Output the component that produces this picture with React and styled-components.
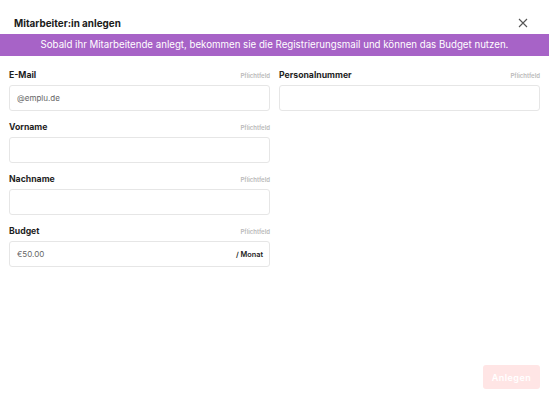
import React, { useState } from 'react';
import styled, { createGlobalStyle } from 'styled-components';

const GlobalStyle = createGlobalStyle`
  body {
    margin: 0;
    background: #ffffff;
    font-family: Inter, "Noto Sans", sans-serif;
  }
`;

const Modal = styled.div`
  width: 549px;
  height: 398px;
  display: flex;
  flex-direction: column;
  background: white;
`;

const Header = styled.header`
  display: flex;
  align-items: center;
  justify-content: space-between;
  height: 34px;
  padding: 11px 20px 0 14px;
  box-sizing: border-box;
`;

const Title = styled.h2`
  margin: 0;
  font-size: 9.9px;
  font-weight: 700;
  color: #1b1b1b;
`;

const CloseButton = styled.button`
  border: none;
  background: none;
  padding: 0;
  width: 12px;
  height: 12px;
  display: flex;
  align-items: center;
  justify-content: center;
  cursor: pointer;
`;

const Banner = styled.div`
  background: #a763c7;
  color: white;
  font-size: 9.7px;
  text-align: center;
  height: 22px;
  line-height: 22px;
`;

const Form = styled.form`
  flex: 1;
  display: flex;
  flex-direction: column;
  padding: 14px 9px 9px 9px;
`;

const Grid = styled.div`
  display: grid;
  grid-template-columns: 1fr 1fr;
  column-gap: 9px;
  align-items: start;
`;

const Column = styled.div`
  display: flex;
  flex-direction: column;
  gap: 11px;
`;

const Field = styled.div`
  display: flex;
  flex-direction: column;
`;

const LabelRow = styled.div`
  display: flex;
  justify-content: space-between;
  align-items: baseline;
  height: 15px;
`;

const Label = styled.label`
  font-size: 8.7px;
  font-weight: 700;
  color: #1e1e1e;
`;

const Required = styled.span`
  font-size: 6px;
  font-weight: 600;
  color: #b9b9b9;
`;

const InputBox = styled.div`
  display: flex;
  align-items: center;
  height: 26px;
  border: 1px solid #e6e6e6;
  border-radius: 3px;
  padding: 0 6px 0 7px;
  box-sizing: border-box;
`;

const Input = styled.input`
  flex: 1;
  min-width: 0;
  border: none;
  outline: none;
  background: transparent;
  font-family: inherit;
  font-size: 8px;
  color: #555;
  padding: 0;
  &::placeholder {
    color: #666;
  }
`;

const Suffix = styled.span`
  font-size: 7.3px;
  font-weight: 600;
  color: #222;
`;

const Footer = styled.div`
  margin-top: auto;
  display: flex;
  justify-content: flex-end;
`;

const SubmitButton = styled.button`
  width: 57px;
  height: 24px;
  border: none;
  border-radius: 3px;
  background: #ffe5e5;
  color: #ffffff;
  font-family: inherit;
  font-size: 9px;
  font-weight: 600;
  letter-spacing: 0.5px;
  cursor: not-allowed;
`;

function TextField({ label, value, onChange, placeholder, suffix }) {
  return (
    <Field>
      <LabelRow>
        <Label>{label}</Label>
        <Required>Pflichtfeld</Required>
      </LabelRow>
      <InputBox>
        <Input value={value} onChange={onChange} placeholder={placeholder} />
        {suffix && <Suffix>{suffix}</Suffix>}
      </InputBox>
    </Field>
  );
}

export default function App() {
  const [form, setForm] = useState({
    email: '',
    personalnummer: '',
    vorname: '',
    nachname: '',
    budget: '',
  });

  const set = (key) => (e) => setForm((prev) => ({ ...prev, [key]: e.target.value }));

  return (
    <>
      <GlobalStyle />
      <Modal>
        <Header>
          <Title>Mitarbeiter:in anlegen</Title>
          <CloseButton aria-label="Schließen">
            <svg width="10" height="10" viewBox="0 0 10 10" fill="none" stroke="#555" strokeWidth="1.1">
              <path d="M1 1L9 9M9 1L1 9" />
            </svg>
          </CloseButton>
        </Header>
        <Banner>
          Sobald ihr Mitarbeitende anlegt, bekommen sie die Registrierungsmail und können das Budget nutzen.
        </Banner>
        <Form onSubmit={(e) => e.preventDefault()}>
          <Grid>
            <Column>
              <TextField label="E-Mail" value={form.email} onChange={set('email')} placeholder="@emplu.de" />
              <TextField label="Vorname" value={form.vorname} onChange={set('vorname')} />
              <TextField label="Nachname" value={form.nachname} onChange={set('nachname')} />
              <TextField
                label="Budget"
                value={form.budget}
                onChange={set('budget')}
                placeholder="€50.00"
                suffix="/ Monat"
              />
            </Column>
            <Column>
              <TextField
                label="Personalnummer"
                value={form.personalnummer}
                onChange={set('personalnummer')}
              />
            </Column>
          </Grid>
          <Footer>
            <SubmitButton type="submit" disabled>
              Anlegen
            </SubmitButton>
          </Footer>
        </Form>
      </Modal>
    </>
  );
}
